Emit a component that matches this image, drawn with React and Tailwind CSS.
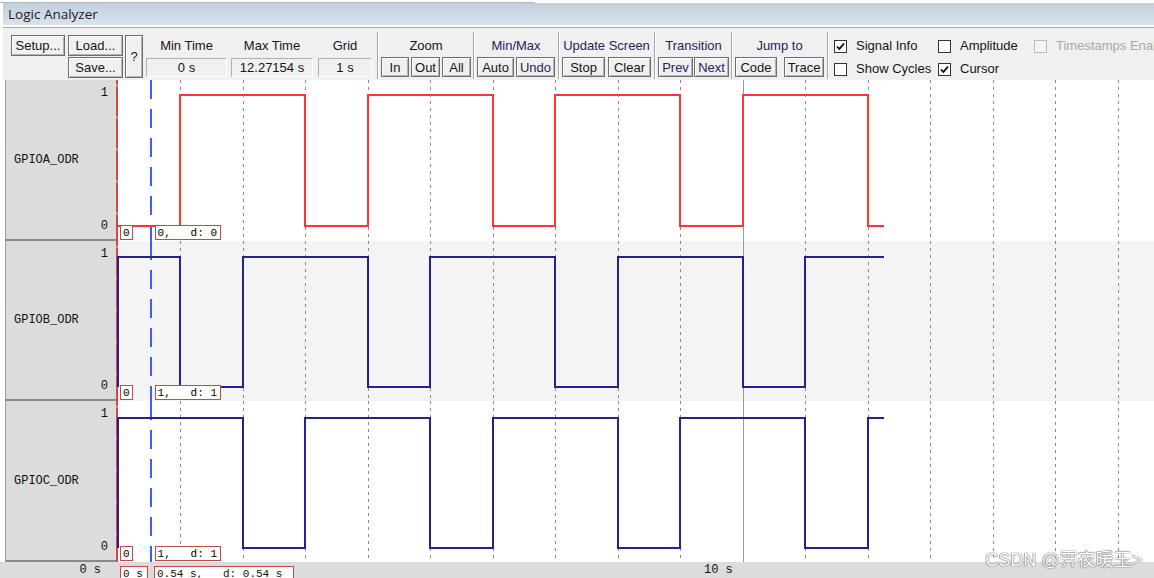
const PX = 62.5;
const X0 = 1.5;
const tx = (t) => X0 + t * PX;

const signals = [
  {
    name: 'GPIOA_ODR',
    color: '#ff3434',
    rowH: 'h-[161px]',
    bg: 'bg-white',
    hi: 15,
    lo: 146,
    start: 0,
    edges: [1, 3, 4, 6, 7, 9, 10, 12],
    value: '0,   d: 0',
  },
  {
    name: 'GPIOB_ODR',
    color: '#23238c',
    rowH: 'h-[160px]',
    bg: 'bg-[#f4f4f4]',
    hi: 16,
    lo: 146,
    start: 1,
    edges: [1, 2, 4, 5, 7, 8, 10, 11],
    value: '1,   d: 1',
  },
  {
    name: 'GPIOC_ODR',
    color: '#23238c',
    rowH: 'h-[161px]',
    bg: 'bg-white',
    hi: 17,
    lo: 147,
    start: 1,
    edges: [2, 3, 5, 6, 8, 9, 11, 12],
    value: '1,   d: 1',
  },
];

const END = 12.27154;

function wavePath(sig) {
  let level = sig.start;
  const y = (l) => (l ? sig.hi : sig.lo);
  let d = `M ${X0 + 0.5} ${sig.lo} V ${y(level)}`;
  if (!sig.start) d = `M ${X0 + 0.5} ${y(level)}`;
  for (const t of sig.edges) {
    level = level ? 0 : 1;
    d += ` H ${tx(t)} V ${y(level)}`;
  }
  d += ` H ${tx(END)}`;
  return d;
}

function Btn({ children, className = '' }) {
  return (
    <div
      className={`flex items-center justify-center border border-[#6e6e6e] bg-[#f0f0f0] shadow-[inset_1px_1px_0_#ffffff,inset_-1px_-1px_0_#b4b4b4] text-[13px] leading-none whitespace-nowrap ${className}`}
    >
      {children}
    </div>
  );
}

function Field({ label, value, className = '' }) {
  return (
    <div className={`flex flex-col pt-[9px] ${className}`}>
      <div className="h-[18px] flex items-center justify-center text-[13px] whitespace-nowrap">{label}</div>
      <div className="mt-[3px] h-[19px] flex items-center justify-center border-t border-l border-[#b0b0b0] border-b border-r border-b-white border-r-white text-[13px]">
        {value}
      </div>
    </div>
  );
}

function Sep({ className = '' }) {
  return <div className={`self-stretch mt-[4px] mb-[1px] w-[2px] border-l border-[#a6a6a6] border-r border-r-white ${className}`} />;
}

function Group({ label, children, className = '', labelClass = '' }) {
  return (
    <div className={`flex flex-col pt-[9px] ${className}`}>
      <div className={`h-[18px] flex items-center justify-center text-[13px] whitespace-nowrap ${labelClass}`}>{label}</div>
      <div className="mt-[2px] h-[20px] flex">{children}</div>
    </div>
  );
}

function Check({ checked, disabled, label }) {
  return (
    <div className="h-[14px] flex items-center">
      <div
        className={`w-[13px] h-[13px] shrink-0 flex items-center justify-center border ${
          disabled ? 'border-[#bcbcbc] bg-[#f4f4f4]' : 'border-[#333] bg-white'
        }`}
      >
        {checked && (
          <svg width="11" height="11" viewBox="0 0 11 11">
            <path d="M2 5.5 L4.4 8 L9 2.5" fill="none" stroke="#000" strokeWidth="1.8" />
          </svg>
        )}
      </div>
      <span className={`ml-[9px] text-[13px] whitespace-nowrap ${disabled ? 'text-[#a8a8a8]' : ''}`}>{label}</span>
    </div>
  );
}

function Toolbar() {
  return (
    <div className="ml-[3px] h-[52px] shrink-0 flex items-start bg-[#f0f0f0] text-[#151515]">
      <div className="pl-[8px] pt-[7px] flex shrink-0">
        <Btn className="w-[54px] h-[21px]">Setup...</Btn>
        <div className="ml-[3px] flex flex-col gap-[1px]">
          <Btn className="w-[55px] h-[21px]">Load...</Btn>
          <Btn className="w-[55px] h-[21px]">Save...</Btn>
        </div>
        <Btn className="ml-[2px] w-[18px] h-[43px]">?</Btn>
      </div>
      <Field label="Min Time" value="0 s" className="ml-[3px] w-[81px] shrink-0" />
      <Field label="Max Time" value="12.27154 s" className="ml-[4px] w-[82px] shrink-0" />
      <Field label="Grid" value="1 s" className="ml-[5px] w-[54px] shrink-0" />
      <Sep className="ml-[5px] shrink-0" />
      <Group label="Zoom" className="ml-[2px] shrink-0">
        <Btn className="w-[28px]">In</Btn>
        <Btn className="ml-[2px] w-[29px]">Out</Btn>
        <Btn className="ml-[2px] w-[29px]">All</Btn>
      </Group>
      <Sep className="ml-[2px] shrink-0" />
      <Group label="Min/Max" className="ml-[2px] shrink-0" labelClass="text-[#24245a]">
        <Btn className="w-[37px]">Auto</Btn>
        <Btn className="ml-[2px] w-[39px] text-[#24245a]">Undo</Btn>
      </Group>
      <Sep className="ml-[3px] shrink-0" />
      <Group label="Update Screen" className="ml-[2px] w-[89px] shrink-0" labelClass="text-[#24245a]">
        <Btn className="w-[43px]">Stop</Btn>
        <Btn className="ml-[3px] w-[43px]">Clear</Btn>
      </Group>
      <Sep className="ml-[3px] shrink-0" />
      <Group label="Transition" className="ml-[2px] shrink-0" labelClass="text-[#24245a]">
        <Btn className="w-[35px] text-[#24245a]">Prev</Btn>
        <Btn className="ml-[1px] w-[35px] text-[#24245a]">Next</Btn>
      </Group>
      <Sep className="ml-[2px] shrink-0" />
      <Group label="Jump to" className="ml-[2px] shrink-0" labelClass="text-[#24245a]">
        <Btn className="w-[42px]">Code</Btn>
        <Btn className="ml-[7px] w-[40px]">Trace</Btn>
      </Group>
      <Sep className="ml-[3px] shrink-0" />
      <div className="ml-[5px] pt-[11px] flex flex-1 min-w-0 overflow-hidden">
        <div className="w-[104px] shrink-0 flex flex-col gap-[9px]">
          <Check checked label="Signal Info" />
          <Check label="Show Cycles" />
        </div>
        <div className="w-[96px] shrink-0 flex flex-col gap-[9px]">
          <Check label="Amplitude" />
          <Check checked label="Cursor" />
        </div>
        <div className="shrink-0 flex flex-col">
          <Check disabled label="Timestamps Enable" />
        </div>
      </div>
    </div>
  );
}

function Grid() {
  const lines = [];
  for (let k = 1; k <= 16; k++) {
    const x = Math.round(tx(k)) + 0.5;
    lines.push(
      k === 10 ? (
        <line key={k} x1={x} y1="0" x2={x} y2="100%" stroke="#9a9a9a" strokeWidth="1" />
      ) : (
        <line key={k} x1={x} y1="0" x2={x} y2="100%" stroke="#8a8a8a" strokeWidth="1" strokeDasharray="3 4" />
      )
    );
  }
  return lines;
}

function SignalRow({ sig }) {
  return (
    <div className={`flex shrink-0 ${sig.rowH}`}>
      <div className="w-[5px] bg-white" />
      <div className="w-[111px] border-l border-[#9c9c9c] border-b-2 border-b-[#8a8a8a] bg-[#dcdcdc] flex flex-col pt-[6px] pb-[6px] pr-[8px] font-['Liberation_Mono',monospace] text-[12px] leading-[14px] text-[#111]">
        <div className="text-right">1</div>
        <div className="flex-1 flex items-center pl-[8px]">{sig.name}</div>
        <div className="text-right">0</div>
      </div>
      <div className={`relative flex-1 ${sig.bg}`}>
        <svg className="absolute inset-0 w-full h-full" shapeRendering="crispEdges">
          <Grid />
          <line x1="0.5" y1="0" x2="0.5" y2="100%" stroke="#ee3c3c" strokeWidth="2" />
          <line x1="0.5" y1="4" x2="0.5" y2="100%" stroke="#9a9a9a" strokeWidth="2" strokeDasharray="3 29" />
          <line x1="35" y1="0" x2="35" y2="100%" stroke="#3e5cff" strokeWidth="2" strokeDasharray="19 10" />
          <path d={wavePath(sig)} fill="none" stroke={sig.color} strokeWidth="2" />
        </svg>
        <div className="absolute bottom-[1px] left-[4px] flex items-end font-['Liberation_Mono',monospace] text-[11px] leading-[12px] text-black">
          <div className="h-[15px] px-[2px] border border-[#c24a48] bg-white flex items-center">0</div>
          <div className="ml-[22px] h-[15px] w-[66px] px-[2px] border border-[#c24a48] bg-white flex items-center whitespace-pre">
            {sig.value}
          </div>
        </div>
      </div>
    </div>
  );
}

export default function App() {
  return (
    <div className="relative w-[1154px] h-[578px] overflow-hidden bg-white flex flex-col font-['Liberation_Sans',Arial,sans-serif] text-[#111]">
      {/* window edge */}
      <div className="h-[3px] shrink-0 flex">
        <div className="w-[535px] border-b border-[#b8b8b8]" />
      </div>
      {/* title bar */}
      <div className="ml-[3px] h-[22px] shrink-0 flex items-center pl-[5px] bg-gradient-to-b from-[#c2cedb] to-[#d9e3ee] font-['Open_Sans',sans-serif] text-[13.5px] text-[#1c1c1c]">
        Logic Analyzer
      </div>
      <div className="ml-[3px] h-[2px] shrink-0 bg-white" />
      <div className="ml-[3px] h-[1px] shrink-0 bg-[#a8a8a8]" />
      <Toolbar />

      {signals.map((s) => (
        <SignalRow key={s.name} sig={s} />
      ))}

      {/* time axis */}
      <div className="h-[16px] shrink-0 flex bg-[#dcdcdc] font-['Liberation_Mono',monospace] text-[12px] leading-[14px] text-[#111]">
        <div className="w-[116px] text-right pr-[15px] pt-[1px]">0 s</div>
        <div className="relative flex-1 flex items-start pt-[4px] text-[11px] leading-[12px]">
          <div className="ml-[4px] h-[15px] w-[28px] px-[2px] border border-[#c24a48] bg-white flex items-center whitespace-pre">0 s</div>
          <div className="ml-[6px] h-[15px] w-[140px] px-[2px] border border-[#c24a48] bg-white flex items-center whitespace-pre">
            0.54 s,   d: 0.54 s
          </div>
          <div className="absolute left-[588px] top-[1px] text-[12px] leading-[14px]">10 s</div>
        </div>
      </div>

      <div className="absolute right-[12px] bottom-[9px] font-['Liberation_Sans','Noto_Sans_CJK_SC',sans-serif] text-[18px] leading-none text-white [text-shadow:0_0_1px_#6e6e6e,0_0_1px_#6e6e6e,0_0_1px_#6e6e6e]">
        CSDN @霁夜暖玉&gt;
      </div>
    </div>
  );
}
